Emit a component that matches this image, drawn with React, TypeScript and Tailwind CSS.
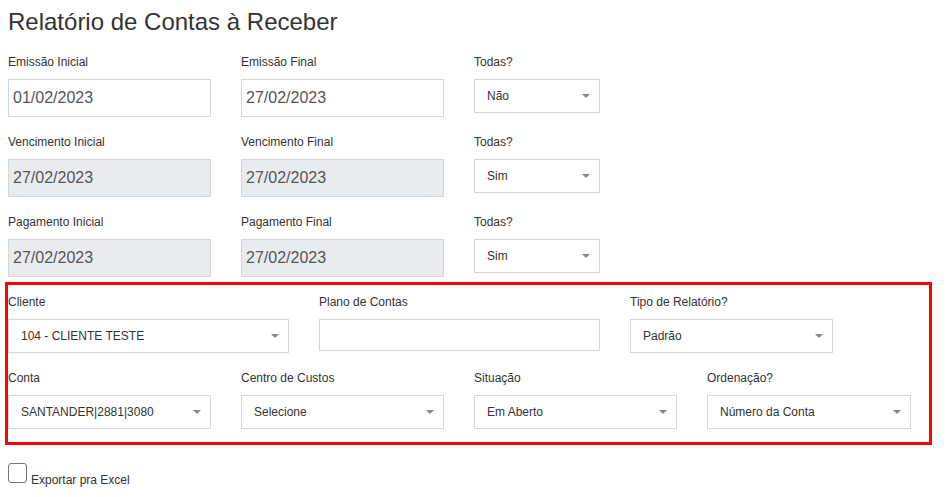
import React from "react";

const font = { fontFamily: '"Liberation Sans", Arial, sans-serif' };

function Label({ text }: { text: string }) {
    return <div className="h-[17px] text-[12px] leading-[17px] text-[#333] mt-[1px] mb-[8px] whitespace-nowrap">{text}</div>;
}

function DateInput({ value, disabled }: { value: string; disabled?: boolean }) {
    return (
        <div
            className={`h-[38px] border border-[#d2d6de] flex items-center pl-[4px] text-[16px] text-[#555] ${
                disabled ? "bg-[#e9ecef]" : "bg-white"
            }`}
        >
            {value}
        </div>
    );
}

function Arrow() {
    return (
        <svg width="8" height="4" viewBox="0 0 8 4" className="shrink-0">
            <polygon points="0,0 8,0 4,4" fill="#888" />
        </svg>
    );
}

function Select({ value }: { value: string }) {
    return (
        <div className="h-[34px] border border-[#d2d6de] bg-white flex items-center justify-between pl-[12px] pr-[9px] text-[12px] text-[#333]">
            <span className="whitespace-nowrap">{value}</span>
            <Arrow />
        </div>
    );
}

export default function App() {
    const dateRows = [
        { a: "Emissão Inicial", av: "01/02/2023", b: "Emissão Final", bv: "27/02/2023", sel: "Não", disabled: false },
        { a: "Vencimento Inicial", av: "27/02/2023", b: "Vencimento Final", bv: "27/02/2023", sel: "Sim", disabled: true },
        { a: "Pagamento Inicial", av: "27/02/2023", b: "Pagamento Final", bv: "27/02/2023", sel: "Sim", disabled: true },
    ];

    return (
        <div className="w-[947px] h-[497px] bg-white pl-[8px] overflow-hidden" style={font}>
            <h1 className="text-[24px] leading-[26px] text-[#333] pt-[9px] mb-[18px]">Relatório de Contas à Receber</h1>

            {dateRows.map((r) => (
                <div key={r.a} className="grid grid-cols-[203px_203px_126px] gap-x-[30px] mb-[16px]">
                    <div>
                        <Label text={r.a} />
                        <DateInput value={r.av} disabled={r.disabled} />
                    </div>
                    <div>
                        <Label text={r.b} />
                        <DateInput value={r.bv} disabled={r.disabled} />
                    </div>
                    <div>
                        <Label text="Todas?" />
                        <Select value={r.sel} />
                    </div>
                </div>
            ))}

            {/* filtros destacados */}
            <div className="ml-[-3px] mt-[-11px] w-[927px] border-[3px] border-[#ff0000] pl-0 pt-[8px] pb-[13px]">
                <div className="grid grid-cols-[281px_281px_203px] gap-x-[30px] items-start">
                    <div>
                        <Label text="Cliente" />
                        <Select value="104 - CLIENTE TESTE" />
                    </div>
                    <div>
                        <Label text="Plano de Contas" />
                        <div className="h-[32px] border border-[#d2d6de] bg-white" />
                    </div>
                    <div>
                        <Label text="Tipo de Relatório?" />
                        <Select value="Padrão" />
                    </div>
                </div>
                <div className="grid grid-cols-[203px_203px_203px_204px] gap-x-[30px] mt-[16px]">
                    <div>
                        <Label text="Conta" />
                        <Select value="SANTANDER|2881|3080" />
                    </div>
                    <div>
                        <Label text="Centro de Custos" />
                        <Select value="Selecione" />
                    </div>
                    <div>
                        <Label text="Situação" />
                        <Select value="Em Aberto" />
                    </div>
                    <div>
                        <Label text="Ordenação?" />
                        <Select value="Número da Conta" />
                    </div>
                </div>
            </div>

            <div className="flex items-end mt-[18px]">
                <span className="w-[19px] h-[20px] border border-[#767676] rounded-[3px] bg-white shrink-0" />
                <span className="ml-[4px] text-[12px] leading-[14px] text-[#333] mb-[-4px]">Exportar pra Excel</span>
            </div>
        </div>
    );
}
